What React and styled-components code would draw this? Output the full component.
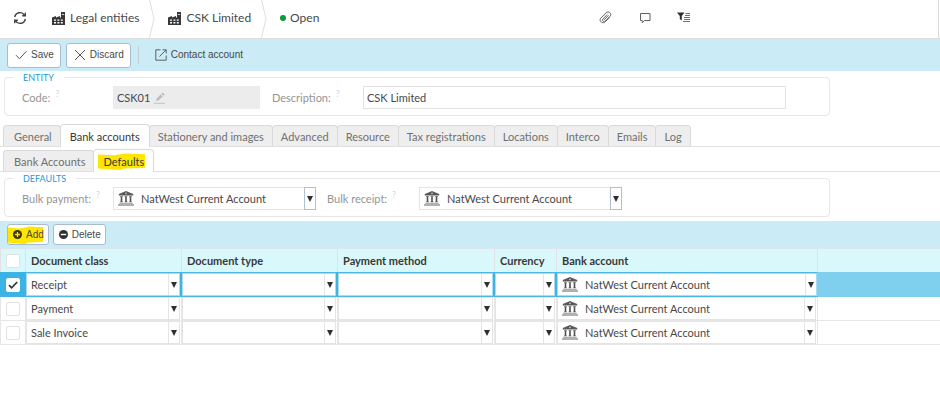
import React, { useState } from "react";
import styled, { createGlobalStyle, css } from "styled-components";

const uiFont = `Lato, "Open Sans", sans-serif`;
const buttonFont = `"Liberation Sans", Arial, sans-serif`;

const GlobalStyle = createGlobalStyle`
  *, *::before, *::after { box-sizing: border-box; }
  body { margin: 0; background: #fff; }
  button, input, select { font: inherit; color: inherit; }
`;

const Page = styled.div`
  font-family: ${uiFont};
  font-size: 11px;
  line-height: 16px;
  color: #484848;
`;

/* Header with breadcrumbs */

const Header = styled.header`
  display: flex;
  align-items: stretch;
  height: 39px;
  border-bottom: 1px solid #dcdcdc;
`;

const IconButton = styled.button`
  display: flex;
  align-items: center;
  justify-content: center;
  width: 39px;
  padding: 0 0 3px;
  border: 0;
  background: none;
`;

const Crumbs = styled.nav`
  display: flex;
  flex: 1;
`;

const Crumb = styled.a`
  display: flex;
  align-items: center;
  gap: 5px;
  padding: 0 0 2px 13px;
  font-size: 12px;
  white-space: nowrap;
  color: #484848;
  text-decoration: none;
`;

const Separator = styled.svg`
  flex: none;
  width: 6px;
  height: 38px;
  margin-left: 10px;
`;

const StatusDot = styled.span`
  width: 6px;
  height: 6px;
  margin-right: -1px;
  border-radius: 50%;
  background: #0b9a3c;
`;

const HeaderTools = styled.div`
  display: flex;
  margin-right: 235px;
`;

const HeaderEdge = styled.div`
  width: 2px;
  border-left: 1px solid #dcdcdc;
`;

/* Toolbars */

const Toolbar = styled.div`
  display: flex;
  align-items: center;
  gap: ${(p) => (p.$compact ? "4px" : "5px")};
  height: ${(p) => (p.$compact ? "27px" : "32px")};
  padding: 0 7px;
  background: #cbebf6;
  font-family: ${buttonFont};
  font-size: 10px;
`;

const Button = styled.button`
  position: relative;
  isolation: isolate;
  display: flex;
  align-items: center;
  gap: 4px;
  height: ${(p) => (p.$compact ? "21px" : "25px")};
  padding: ${(p) => (p.$compact ? "0 4px 0 5px" : "0 6px 0 7px")};
  border: 1px solid #a9bccb;
  border-radius: 3px;
  background: #fff;
  white-space: nowrap;
`;

const Divider = styled.span`
  width: 1px;
  height: 18px;
  margin: 0 11px 0 2px;
  background: #c3cdd1;
`;

const ToolLink = styled.a`
  display: flex;
  align-items: center;
  gap: 4px;
  color: #484848;
  text-decoration: none;
`;

const Marker = styled.svg`
  position: absolute;
  z-index: -1;
  left: ${(p) => p.$left};
  top: ${(p) => p.$top};
  width: ${(p) => p.$width};
  height: ${(p) => p.$height};
  fill: #ffe600;
`;

/* Field groups */

const Group = styled.fieldset`
  display: flex;
  align-items: center;
  max-width: 826px;
  min-width: 0;
  margin: ${(p) => p.$margin};
  padding: 2px 0 6px 17px;
  border: 1px solid #e6e6e6;
  border-radius: 4px;
`;

const Legend = styled.legend`
  margin-left: -9px;
  padding: 0 10px;
  font-size: 9px;
  line-height: 13px;
  color: #2499d3;
`;

const FieldLabel = styled.label`
  flex: none;
  width: ${(p) => p.$width};
  color: #959595;
`;

const Hint = styled.sup`
  margin-left: 5px;
  font-size: 9px;
  line-height: 0;
  color: #dccbf0;
`;

const CodeBox = styled.div`
  display: flex;
  align-items: center;
  flex: none;
  width: 147px;
  height: 23px;
  margin-right: 12px;
  padding-left: 4px;
  background: #ececec;
`;

const CodeInput = styled.input`
  width: 37px;
  padding: 0;
  border: 0;
  background: none;
  outline: none;
`;

const TextInput = styled.input`
  flex: 1;
  min-width: 0;
  height: 23px;
  margin-right: 43px;
  padding: 0 3px;
  border: 1px solid #e2e2e2;
  outline: none;
`;

/* Drop-downs */

const SelectBox = styled.div`
  position: relative;
  display: flex;
  align-items: center;
  height: 23px;
  border: 1px solid #e4e4e4;
  background: #fff;
  ${(p) =>
    p.$field &&
    css`
      flex: none;
      width: 203px;
      margin-right: 11px;
    `}
`;

const Select = styled.select`
  flex: 1;
  min-width: 0;
  width: 100%;
  height: 100%;
  padding: 0 14px 0 ${(p) => (p.$icon ? "27px" : "4px")};
  border: 0;
  background: none;
  appearance: none;
  outline: none;
`;

const SelectIcon = styled.span`
  position: absolute;
  left: 4px;
  top: 3px;
  display: flex;
  pointer-events: none;
`;

const Arrow = styled.span`
  position: absolute;
  top: 0;
  bottom: 0;
  right: 0;
  display: flex;
  align-items: center;
  justify-content: center;
  width: 11px;
  border-left: 1px solid #e4e4e4;
  pointer-events: none;
  ${(p) =>
    p.$framed &&
    css`
      inset: -1px -1px -1px auto;
      width: 12px;
      border: 1px solid #afc1d0;
    `}
`;

/* Tabs */

const TabBar = styled.div`
  display: flex;
  align-items: flex-end;
  height: ${(p) => (p.$sub ? "25px" : "24px")};
  padding-left: 4px;
  border-bottom: 1px solid #e0e0e0;
`;

const Tab = styled.button`
  height: 21px;
  margin-left: -1px;
  padding: 2px 8px 0;
  border: 1px solid #d9d9d9;
  border-bottom: 0;
  border-radius: 4px 4px 0 0;
  background: #eeeeee;
  color: #707070;
  white-space: nowrap;
  &:first-child { padding-left: 10px; }
  ${(p) =>
    p.$active &&
    css`
      position: relative;
      height: 23px;
      margin-bottom: -1px;
      padding: 2px 9px 1px;
      background: #fff;
      color: #383838;
      isolation: isolate;
    `}
`;

/* Grid */

const Grid = styled.table`
  width: 100%;
  table-layout: fixed;
  border-collapse: separate;
  border-spacing: 0;
`;

const HeadCell = styled.th`
  height: 24px;
  padding: 0 5px;
  border-right: 1px solid #e1e1e6;
  border-top: 1px solid #dce6ea;
  background: #d8f8fb;
  font-weight: 700;
  text-align: left;
  white-space: nowrap;
  color: #383838;
  &:first-child { border-left: 1px solid #e1e1e6; }
  &:last-child { border-right: 0; }
`;

const Cell = styled.td`
  height: 24px;
  padding: 0 1px 0 0;
  border-bottom: 1px solid #e6e6e6;
  border-right: 1px solid #e6e6e6;
  &:first-child { border-left: 1px solid #e6e6e6; }
  &:last-child { border-right: 0; }
  ${(p) =>
    p.$selected &&
    css`
      height: 25px;
      padding: 0;
      border-top: 1px solid #4fb8e2;
      border-bottom: 1px solid #4fb8e2;
      border-right: 2px solid #3fb3e2;
      &:nth-last-child(2) { border-right: 1px solid #7fd0ee; }
      &:last-child {
        border-color: #7fd0ee;
        background: #7fd0ee;
      }
      &:first-child {
        border-color: #3bb4e5;
        border-right-width: 1px;
        background: #3bb4e5;
      }
    `}
`;

const TickLabel = styled.label`
  display: flex;
  align-items: center;
  justify-content: center;
`;

const TickBox = styled.input`
  width: 14px;
  height: 14px;
  margin: 0;
  appearance: none;
  border: 1px solid #e2e2e2;
  border-radius: 2px;
  background: #fff;
  &:checked {
    background: #fff url("data:image/svg+xml,%3Csvg xmlns='http://www.w3.org/2000/svg' viewBox='0 0 12 12'%3E%3Cpath d='M2 6.2 4.6 8.8 10.2 3' fill='none' stroke='%23333' stroke-width='1.7'/%3E%3C/svg%3E") center / 12px no-repeat;
    border-color: #fff;
  }
`;

const CellSelect = styled(SelectBox)`
  ${(p) => p.$selected && css`border-color: #a9dcf1;`}
`;

/* Drawings */

const RefreshIcon = () => (
  <svg width="14" height="14" viewBox="0 0 14 14" fill="none" stroke="#404040" strokeWidth="1.4">
    <path d="M1.7 6.2A5.3 5.3 0 0 1 11.5 4.2M12.3 7.8A5.3 5.3 0 0 1 2.5 9.8" />
    <path d="M12.3 1.8V4.7H9.2M1.7 12.2V9.3h3.1" />
  </svg>
);

const FactoryIcon = () => (
  <svg width="13" height="13" viewBox="0 0 13 13" fill="#383838">
    <path d="M0 5.6 4 4v1.6L8 4v1.4h1V0h4v13H0z" />
    <path
      d="M2 7.4h2v1.4H2zM5.4 7.4h2v1.4h-2zM8.8 7.4h2v1.4h-2zM2 10h2v1.4H2zM5.4 10h2v1.4h-2zM8.8 10h2v1.4h-2zM9.8 2h2.4v.7H9.8z"
      fill="#fff"
    />
  </svg>
);

const CrumbEdge = () => (
  <Separator viewBox="0 0 6 38" fill="none" stroke="#dedede">
    <path d="M.5 0 5 18.5.5 38" />
  </Separator>
);

const ClipIcon = () => (
  <svg width="13" height="13" viewBox="0 0 13 13" fill="none" stroke="#606060" strokeWidth="1">
    <path d="M10.6 6.4 6.2 10.8C3.5 13.4-.6 9.8 1.9 7L7.2 1.7c2.4-2.2 6 .9 3.9 3.5L6.3 10c-1.6 1.4-3.6-.5-2.4-2.1L8.3 3.5M4.9 8.9l4.5-4.5" />
  </svg>
);

const CommentIcon = () => (
  <svg width="12" height="12" viewBox="0 0 12 12" fill="none" stroke="#606060">
    <path d="M1.5 1.5h9.5v7H5.6L3.2 10.8V8.5H1.5z" strokeLinejoin="round" />
  </svg>
);

const FilterIcon = () => (
  <svg width="14" height="11" viewBox="0 0 14 11">
    <path d="M0 .5h7.5L4.8 4v4.4L2.8 7V4z" fill="#303030" />
    <path d="M8.5 1.5H13M8 3.5h5M7 5.5h6M7 7.5h6M6 9.5h7" stroke="#707070" />
  </svg>
);

const CheckIcon = () => (
  <svg width="12" height="10" viewBox="0 0 12 10" fill="none" stroke="#505050">
    <path d="m1 5.2 3.5 3.5L11.5 1.2" />
  </svg>
);

const CrossIcon = () => (
  <svg width="12" height="12" viewBox="0 0 12 12" fill="none" stroke="#505050">
    <path d="m1 1 10 10M11 1 1 11" />
  </svg>
);

const ExternalIcon = () => (
  <svg width="12" height="12" viewBox="0 0 12 12" fill="none" stroke="#606060">
    <path d="M5.5.8H.8v10.4h10.4V6.5M7.5.8h3.7v3.7M11.2.8 4.5 7.5" />
  </svg>
);

const PlusIcon = () => (
  <svg width="9" height="9" viewBox="0 0 9 9">
    <circle cx="4.5" cy="4.5" r="4.5" fill="#383818" />
    <path d="M4.5 2v5M2 4.5h5" stroke="#ffe600" strokeWidth="1.3" />
  </svg>
);

const MinusIcon = () => (
  <svg width="9" height="9" viewBox="0 0 9 9">
    <circle cx="4.5" cy="4.5" r="4.5" fill="#303030" />
    <path d="M1.8 4.5h5.4" stroke="#fff" strokeWidth="1.4" />
  </svg>
);

const PencilIcon = () => (
  <svg width="12" height="12" viewBox="0 0 12 12">
    <path d="m2 9 .7-2.6L6.6 2.5l2 2L4.6 8.4zM7.3 1.8 8.8.4l2 2-1.5 1.4z" fill="#bdbdbd" />
    <path d="M0 11.3h11" stroke="#c4c4c4" />
  </svg>
);

const BankIcon = () => (
  <svg width="16" height="15" viewBox="0 0 16 15">
    <path d="M8 0 15.2 3v1.4H.8V3z" fill="#5a5a5a" />
    <circle cx="8" cy="2.4" r=".8" fill="#ccc" />
    <path
      d="M2.2 5.2h2.6v.8h-.5v4.6h.5v.6H2.2v-.6h.5V6h-.5zM6.7 5.2h2.6v.8h-.5v4.6h.5v.6H6.7v-.6h.5V6h-.5zM11.2 5.2h2.6v.8h-.5v4.6h.5v.6h-2.6v-.6h.5V6h-.5z"
      fill="#505050"
    />
    <path d="M1.2 11.8h13.6V13H16v2H0v-2h1.2z" fill="#b0b0b0" />
  </svg>
);

const TriangleIcon = () => (
  <svg width="6" height="6" viewBox="0 0 6 6">
    <path d="M0 0h6L3 6z" fill="#303030" />
  </svg>
);

const Highlight = (props) => (
  <Marker viewBox="0 0 50 18" preserveAspectRatio="none" {...props}>
    <path d="M0 1.5 17 2.5 30 .5 50 1.2V16L28 16.5 24 18 14 17.5 0 16.5z" />
  </Marker>
);

const Dropdown = ({ id, label, value, icon, field, selected }) => {
  const Box = field ? SelectBox : CellSelect;
  return (
    <Box $field={field} $selected={selected}>
      {icon && (
        <SelectIcon>
          <BankIcon />
        </SelectIcon>
      )}
      <Select id={id} aria-label={label} $icon={icon} defaultValue={value}>
        <option value={value}>{value}</option>
      </Select>
      <Arrow $framed={field}>
        <TriangleIcon />
      </Arrow>
    </Box>
  );
};

const tabs = [
  "General",
  "Bank accounts",
  "Stationery and images",
  "Advanced",
  "Resource",
  "Tax registrations",
  "Locations",
  "Interco",
  "Emails",
  "Log",
];

const columns = ["Document class", "Document type", "Payment method", "Currency", "Bank account"];
const account = "NatWest Current Account";
const rows = ["Receipt", "Payment", "Sale Invoice"];

export default function App() {
  const [tab, setTab] = useState("Bank accounts");
  const [checked, setChecked] = useState("Receipt");

  return (
    <Page>
      <GlobalStyle />
      <Header>
        <IconButton aria-label="Refresh">
          <RefreshIcon />
        </IconButton>
        <Crumbs>
          <Crumb href="#entities">
            <FactoryIcon />
            Legal entities
          </Crumb>
          <CrumbEdge />
          <Crumb href="#csk">
            <FactoryIcon />
            CSK Limited
          </Crumb>
          <CrumbEdge />
          <Crumb href="#status">
            <StatusDot />
            Open
          </Crumb>
        </Crumbs>
        <HeaderTools>
          <IconButton aria-label="Attachments">
            <ClipIcon />
          </IconButton>
          <IconButton aria-label="Comments">
            <CommentIcon />
          </IconButton>
          <IconButton aria-label="Filter">
            <FilterIcon />
          </IconButton>
        </HeaderTools>
        <HeaderEdge />
      </Header>

      <Toolbar>
        <Button>
          <CheckIcon />
          Save
        </Button>
        <Button>
          <CrossIcon />
          Discard
        </Button>
        <Divider />
        <ToolLink href="#contact">
          <ExternalIcon />
          Contact account
        </ToolLink>
      </Toolbar>

      <Group $margin="0 4px 7px">
        <Legend>ENTITY</Legend>
        <FieldLabel htmlFor="code" $width="91px">
          Code:<Hint>?</Hint>
        </FieldLabel>
        <CodeBox>
          <CodeInput id="code" defaultValue="CSK01" readOnly />
          <PencilIcon />
        </CodeBox>
        <FieldLabel htmlFor="description" $width="91px">
          Description:<Hint>?</Hint>
        </FieldLabel>
        <TextInput id="description" defaultValue="CSK Limited" />
      </Group>

      <TabBar role="tablist">
        {tabs.map((name) => (
          <Tab key={name} role="tab" aria-selected={name === tab} $active={name === tab} onClick={() => setTab(name)}>
            {name}
          </Tab>
        ))}
      </TabBar>
      <TabBar role="tablist" $sub>
        <Tab role="tab">Bank Accounts</Tab>
        <Tab role="tab" aria-selected $active>
          <Highlight $left="4px" $top="3px" $width="47px" $height="17px" />
          Defaults
        </Tab>
      </TabBar>

      <Group $margin="0 4px 4px">
        <Legend>DEFAULTS</Legend>
        <FieldLabel htmlFor="bulk-payment" $width="91px">
          Bulk payment:<Hint>?</Hint>
        </FieldLabel>
        <Dropdown id="bulk-payment" value={account} icon field />
        <FieldLabel htmlFor="bulk-receipt" $width="92px">
          Bulk receipt:<Hint>?</Hint>
        </FieldLabel>
        <Dropdown id="bulk-receipt" value={account} icon field />
      </Group>

      <Toolbar $compact>
        <Button $compact>
          <Highlight $left="0px" $top="1px" $width="35px" $height="18px" />
          <PlusIcon />
          Add
        </Button>
        <Button $compact>
          <MinusIcon />
          Delete
        </Button>
      </Toolbar>

      <Grid>
        <colgroup>
          <col width="26" />
          <col width="156" />
          <col width="156" />
          <col width="157" />
          <col width="62" />
          <col width="261" />
          <col />
        </colgroup>
        <thead>
          <tr>
            <HeadCell>
              <TickLabel>
                <TickBox type="checkbox" aria-label="Select all" />
              </TickLabel>
            </HeadCell>
            {columns.map((name) => (
              <HeadCell key={name}>{name}</HeadCell>
            ))}
            <HeadCell />
          </tr>
        </thead>
        <tbody>
          {rows.map((name) => {
            const selected = name === checked;
            return (
              <tr key={name}>
                <Cell $selected={selected}>
                  <TickLabel>
                    <TickBox
                      type="checkbox"
                      aria-label={`Select ${name}`}
                      checked={selected}
                      onChange={() => setChecked(selected ? null : name)}
                    />
                  </TickLabel>
                </Cell>
                {columns.map((column, index) => (
                  <Cell key={column} $selected={selected}>
                    <Dropdown
                      label={`${column} for ${name}`}
                      value={index === 0 ? name : index === 4 ? account : ""}
                      icon={index === 4}
                      selected={selected}
                    />
                  </Cell>
                ))}
                <Cell $selected={selected} />
              </tr>
            );
          })}
        </tbody>
      </Grid>
    </Page>
  );
}
